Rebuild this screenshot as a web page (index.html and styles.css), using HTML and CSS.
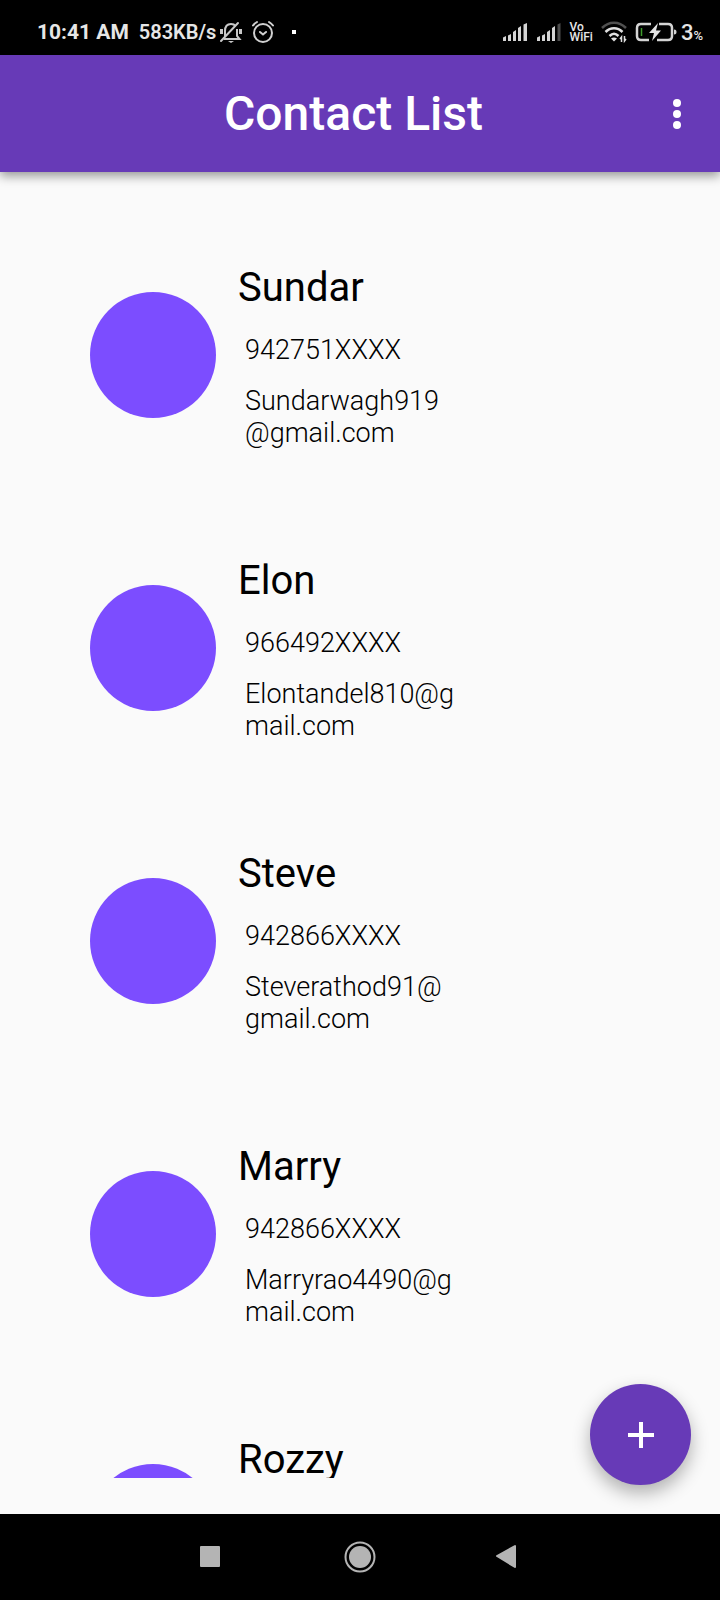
FILE: index.html
```html
<!DOCTYPE html>
<html lang="en">
<head>
<meta charset="utf-8">
<meta name="viewport" content="width=device-width, initial-scale=1">
<title>Contact List</title>
<link rel="stylesheet" href="styles.css">
</head>
<body>
<div class="status">
  <div class="status-side">
    <span class="time">10:41 AM</span>
    <span class="speed">583KB/s</span>
    <svg class="bell" width="24" height="24" viewBox="0 0 24 24" fill="none" stroke="#c8c8c8" stroke-width="2">
      <path d="M6 17v-6c0-4 2-7 6-7 2 0 3.500 .6 4.500 2M18 9v7l2.500 3H5"/>
      <path d="M2 21 19 3" stroke-linecap="round"/>
      <path d="M2.500 9v5M21.500 9v5" stroke-width="3"/>
      <path d="M9 21h6l-3 2z" fill="#c8c8c8" stroke="none"/>
    </svg>
    <svg class="alarm" width="24" height="24" viewBox="0 0 24 24" fill="none" stroke="#d0d0d0" stroke-width="2" stroke-linecap="round">
      <circle cx="12" cy="13" r="9"/>
      <path d="M2 5.500C3 4 4.500 3 6 2M22 5.500C21 4 19.500 3 18 2M9 12l3 2.500 3-2.500"/>
    </svg>
    <span class="dot"></span>
  </div>
  <div class="status-side">
    <svg width="26" height="20" viewBox="0 0 26 20" fill="#d4d4d4">
      <path d="M1 15.500 4 14v5H1zM6 13.500l3-1.500v7H6zM11 10l3-2v11h-3zM16 6l3-2v15h-3zM21.500 2.500l3.500-1.500v18h-3.500z"/>
    </svg>
    <svg width="26" height="20" viewBox="0 0 26 20" fill="#d4d4d4">
      <path d="M1 15.500 4 14v5H1zM6 13.500l3-1.500v7H6zM11 10l3-2v11h-3zM16 6l3-2v15h-3z"/>
      <path d="M21.500 2.500l3-1.500v18h-3z" fill="#4c4c4c"/>
    </svg>
    <span class="vowifi">Vo<br>WiFi</span>
    <svg width="26" height="22" viewBox="0 0 26 22" fill="none" stroke="#e0e0e0" stroke-width="2.500">
      <path d="M1 7C8 0 18 0 25 7" stroke="#505050"/>
      <path d="M4.500 11c5-5 12-5 17 0M8.500 15c3-3 6-3 9 0"/>
      <path d="M10 17.500c2-1.500 4-1.500 6 0l-3 3z" fill="#e0e0e0" stroke="none"/>
      <path d="M20.500 21v-5l-1.500 2M23.500 15v5l1.500-2" stroke-width="1.500"/>
    </svg>
    <svg width="42" height="20" viewBox="0 0 42 20" fill="none">
      <path d="M16 2H6Q2 2 2 6v8q0 4 4 4h8M24 2h9q4 0 4 4v8q0 4-4 4H22" stroke="#d4d4d4" stroke-width="2.500"/>
      <path d="M39 7.500c2 0 2.500 1 2.500 2.500s-.5 2.500-2.500 2.500z" fill="#d4d4d4"/>
      <path d="M6.500 6v8" stroke="#3f9c2c" stroke-width="1.500"/>
      <path d="M23 1 14 11h5l-2 8 9-10.500h-5z" fill="#e4e4e4"/>
    </svg>
    <span class="level">3<small>%</small></span>
  </div>
</div>
<header class="appbar">
  <h1>Contact List</h1>
  <button class="menu" aria-label="More options">
    <svg width="10" height="32" viewBox="0 0 10 32" fill="#fff"><circle cx="5" cy="5" r="4"/><circle cx="5" cy="16" r="4"/><circle cx="5" cy="27" r="4"/></svg>
  </button>
</header>
<main class="screen">
  <ul class="contacts">
    <li class="contact"><span class="avatar"></span><div class="info"><h2>Sundar</h2><p>942751XXXX</p><p>Sundarwagh919@gmail.com</p></div></li>
    <li class="contact"><span class="avatar"></span><div class="info"><h2>Elon</h2><p>966492XXXX</p><p>Elontandel810@gmail.com</p></div></li>
    <li class="contact"><span class="avatar"></span><div class="info"><h2>Steve</h2><p>942866XXXX</p><p>Steverathod91@gmail.com</p></div></li>
    <li class="contact"><span class="avatar"></span><div class="info"><h2>Marry</h2><p>942866XXXX</p><p>Marryrao4490@gmail.com</p></div></li>
    <li class="contact"><span class="avatar"></span><div class="info"><h2>Rozzy</h2></div></li>
  </ul>
  <button class="fab" aria-label="Add contact">
    <svg width="26" height="26" viewBox="0 0 26 26" stroke="#fff" stroke-width="4"><path d="M13 0v26M0 13h26"/></svg>
  </button>
</main>
<nav class="navbar">
  <button aria-label="Recent apps"><svg width="32" height="32" viewBox="0 0 32 32" fill="#b4b4b4"><rect x="6" y="5" width="20" height="21" rx="1"/></svg></button>
  <button aria-label="Home"><svg width="32" height="32" viewBox="0 0 32 32" fill="#b4b4b4"><circle cx="16" cy="16" r="14.500" fill="none" stroke="#b4b4b4" stroke-width="2"/><circle cx="16" cy="16" r="11"/></svg></button>
  <button aria-label="Back"><svg width="32" height="32" viewBox="0 0 32 32" fill="#b4b4b4" stroke="#b4b4b4" stroke-width="2" stroke-linejoin="round"><path d="M3 15 21 5v21z"/></svg></button>
</nav>
</body>
</html>
```
FILE: styles.css
```css
* {
  box-sizing: border-box;
}

body {
  margin: 0;
  height: 100vh;
  display: flex;
  flex-direction: column;
  background: #fafafa;
  color: #000;
  font-family: Roboto, "Liberation Sans", sans-serif;
}

h1, h2, p, ul {
  margin: 0;
  padding: 0;
}

button {
  display: flex;
  align-items: center;
  justify-content: center;
  padding: 0;
  border: 0;
  background: none;
}

svg {
  display: block;
}

.status {
  flex: none;
  height: 55px;
  padding: 9px 17px 0 37px;
  display: flex;
  justify-content: space-between;
  background: #000;
  color: #e6e6e6;
}

.status-side {
  display: flex;
  align-items: center;
  gap: 8px;
}

.time {
  margin-right: 2px;
  font-size: 21px;
  font-weight: 700;
}

.speed {
  font-size: 20px;
  font-weight: 600;
}

.bell {
  margin-left: -5px;
}

.dot {
  width: 4px;
  height: 4px;
  margin-left: 9px;
  background: #fff;
}

.vowifi {
  font-size: 12px;
  line-height: 10px;
  font-weight: 500;
}

.level {
  margin-left: -4px;
  font-size: 22px;
  font-weight: 500;
}

.level small {
  font-size: 13px;
}

.appbar {
  position: relative;
  z-index: 1;
  flex: none;
  height: 117px;
  padding: 0 35px 0 38px;
  display: flex;
  align-items: center;
  background: #673ab7;
  color: #fff;
  box-shadow: 0 4px 10px rgba(0, 0, 0, 0.4);
}

.appbar h1 {
  flex: 1;
  font-size: 48px;
  font-weight: 500;
  text-align: center;
}

.menu {
  width: 16px;
  height: 48px;
}

.screen {
  position: relative;
  flex: 1;
  min-height: 0;
  padding-bottom: 36px;
}

.contacts {
  height: 100%;
  padding: 93px 90px 0;
  overflow: hidden;
  list-style: none;
}

.contact {
  display: flex;
  gap: 22px;
  padding-bottom: 109px;
}

.avatar {
  flex: none;
  width: 126px;
  height: 126px;
  margin-top: 27px;
  border-radius: 50%;
  background: #7c4dff;
}

.info h2 {
  margin-bottom: 23px;
  font-size: 40px;
  line-height: 46px;
  font-weight: 400;
}

.info p {
  width: 210px;
  margin: 0 0 19px 7px;
  font-size: 27px;
  line-height: 32px;
  font-weight: 300;
  word-break: break-all;
}

.info p:last-child {
  margin-bottom: 0;
}

.fab {
  position: absolute;
  right: 29px;
  bottom: 29px;
  width: 101px;
  height: 101px;
  border-radius: 50%;
  background: #673ab7;
  box-shadow: 0 8px 18px rgba(0, 0, 0, 0.3);
}

.navbar {
  flex: none;
  height: 86px;
  display: flex;
  align-items: center;
  justify-content: center;
  gap: 102px;
  background: #000;
}

.navbar button {
  width: 48px;
  height: 48px;
}
```
